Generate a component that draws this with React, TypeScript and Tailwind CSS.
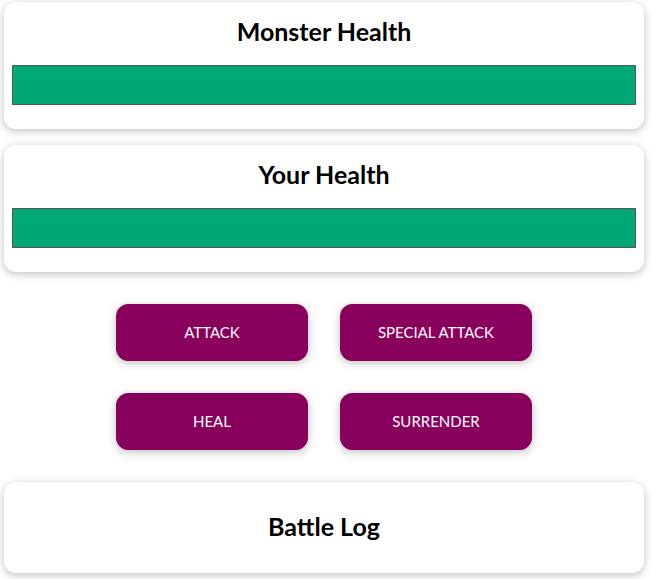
import React from "react";

const font = { fontFamily: "Lato, 'Noto Sans', sans-serif" };

function HealthCard({ title }: { title: string }) {
  return (
    <section className="mb-4 rounded-[12px] bg-white p-2 text-center shadow-[0_2px_8px_rgba(0,0,0,0.26)]">
      <h2 className="mt-[5px] mb-[18px] text-[25px] font-bold leading-8 text-black">{title}</h2>
      <div className="mb-4 h-[40px] w-full border border-[#575757] bg-[#fde5e5]">
        <div className="h-full w-full bg-[#00a876]" />
      </div>
    </section>
  );
}

function Btn({ label }: { label: string }) {
  return (
    <button className="m-4 h-[57px] w-48 rounded-[12px] border border-[#88005b] bg-[#88005b] pb-[1px] text-[15px] leading-6 text-white uppercase shadow-[0_2px_8px_rgba(0,0,0,0.26)]">
      {label}
    </button>
  );
}

export default function App() {
  return (
    <div className="min-h-[579px] bg-white" style={font}>
      <div className="ml-[4px] w-[640px] pt-[2px]">
        <HealthCard title="Monster Health" />
        <HealthCard title="Your Health" />
        <section className="mb-4 flex flex-wrap justify-center">
          <Btn label="Attack" />
          <Btn label="Special Attack" />
          <Btn label="Heal" />
          <Btn label="Surrender" />
        </section>
        <section className="h-[91px] rounded-[12px] bg-white p-2 text-center shadow-[0_2px_8px_rgba(0,0,0,0.26)]">
          <h2 className="mt-[20px] text-[25px] font-bold leading-8 text-black">Battle Log</h2>
        </section>
      </div>
    </div>
  );
}
